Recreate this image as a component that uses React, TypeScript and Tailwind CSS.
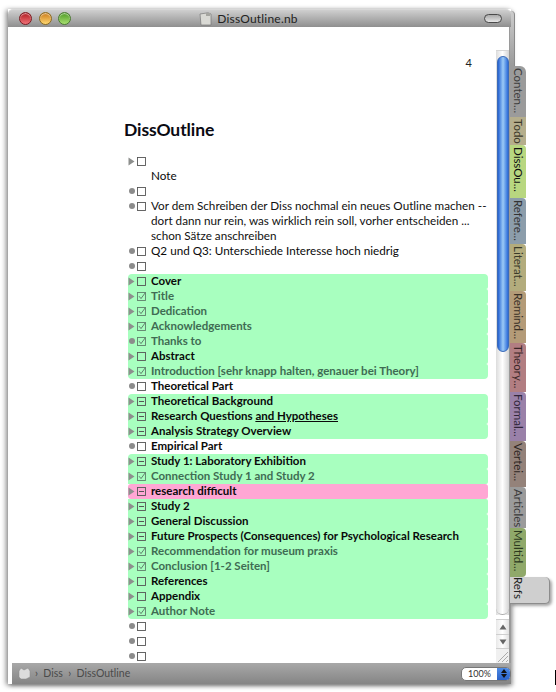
import React from "react";

type Box = "empty" | "check" | "minus";
type Mark = "tri" | "dot" | "none";

function Marker({ mark }: { mark: Mark }) {
  if (mark === "tri")
    return (
      <svg width="7" height="9" viewBox="0 0 7 9" className="shrink-0">
        <path d="M0.5 0.5 L6.5 4.5 L0.5 8.5 Z" fill="#8d8f8d" />
      </svg>
    );
  if (mark === "dot") return <div className="w-[6px] h-[6px] ml-[0.5px] mr-[0.5px] -mt-[2px] rounded-full bg-[#8c8c8c] shrink-0" />;
  return <div className="w-[7px] shrink-0" />;
}

function CheckBox({ box, dim }: { box: Box; dim?: boolean }) {
  const c = dim ? "#5f7f6c" : "#555";
  return (
    <svg width="9" height="9" viewBox="0 0 9 9" className="shrink-0 ml-[2px]">
      <rect x="0.5" y="0.5" width="8" height="8" fill="none" stroke={c} strokeWidth="0.9" />
      {box === "check" && <path d="M2 4.2 L4 6.6 L8.4 0.6" fill="none" stroke={c} strokeWidth="1" />}
      {box === "minus" && <path d="M2 4.5 H7" fill="none" stroke={c} strokeWidth="1" />}
    </svg>
  );
}

function Row({
  mark,
  box,
  children,
  bold,
  dim,
  pink,
  green,
}: {
  mark: Mark;
  box?: Box;
  children?: React.ReactNode;
  bold?: boolean;
  dim?: boolean;
  pink?: boolean;
  green?: boolean;
}) {
  const bg = pink ? "bg-[#ffa6d4] rounded-[3px]" : green ? "bg-[#a8ffbf] rounded-r-[2px]" : "";
  const col = dim ? "text-[#3f6c53]" : "text-[#0a0a0a]";
  return (
    <div className={`flex items-center h-[15px] ${bg}`}>
      <Marker mark={mark} />
      {box ? <CheckBox box={box} dim={dim} /> : <div className="w-[11px] shrink-0" />}
      <span className={`ml-[5px] -mt-[2px] leading-[15px] whitespace-nowrap ${bold ? "font-bold text-[11.5px]" : "text-[11.7px]"} ${col}`}>
        {children}
      </span>
    </div>
  );
}

function Green({ children }: { children: React.ReactNode }) {
  return <div className="rounded-[4px] overflow-hidden">{children}</div>;
}

const tabs: [string, string, string][] = [
  ["Conten...", "h-[51px] bg-[#9b9b9b] rounded-tr-[6px]", "text-[#3d3d3d]"],
  ["Todo", "h-[28px] bg-[#b5ae8c]", "text-[#3d3a2a]"],
  ["DissOu...", "h-[53px] bg-[#b8d780] rounded-tr-[4px]", "text-[#111]"],
  ["Refere...", "h-[46px] bg-[#8c9dab] rounded-tr-[4px]", "text-[#333]"],
  ["Literat...", "h-[47px] bg-[#b3ac7d] rounded-tr-[4px]", "text-[#3a3a2a]"],
  ["Remind...", "h-[52px] bg-[#b49b78] rounded-tr-[4px]", "text-[#3a3026]"],
  ["Theory...", "h-[49px] bg-[#b27e82] rounded-tr-[4px]", "text-[#3a2628]"],
  ["Formal...", "h-[49px] bg-[#9a81a9] rounded-tr-[4px]", "text-[#30263a]"],
  ["Vertei...", "h-[46px] bg-[#94827a] rounded-tr-[4px]", "text-[#2e2622]"],
  ["Articles", "h-[41px] bg-[#9b9b9b] rounded-tr-[4px]", "text-[#3a3a3a]"],
  ["Multid...", "h-[49px] bg-[#90a96a] rounded-tr-[4px] rounded-br-[4px]", "text-[#2c3a1e]"],
];

function Drawer() {
  return (
    <div className="flex flex-col mt-[2px] -ml-[1px] w-[40px] shrink-0">
      <div className="h-[55px] w-[5px] rounded-tr-[4px] bg-gradient-to-b from-[#cdcdcd] to-[#9a9a9a] border-r border-[#8a8a8a]" />
      {tabs.map(([t, cls, tc]) => (
        <div key={t} className={`w-[16px] overflow-hidden flex justify-center ${cls}`}>
          <span className={`[writing-mode:vertical-rl] text-[11.5px] leading-[14px] pt-[2px] whitespace-nowrap ${tc}`}>{t}</span>
        </div>
      ))}
      <div className="h-[27px] w-[40px] bg-[#cfcfcf] rounded-r-[5px] border-r border-b border-[#8c8c8c] shadow-[2px_2px_3px_rgba(0,0,0,0.35)] pl-[1px]">
        <span className="[writing-mode:vertical-rl] text-[11.5px] leading-[14px] text-[#222]">Refs</span>
      </div>
    </div>
  );
}

function Light({ from, to, ring }: { from: string; to: string; ring: string }) {
  return (
    <div
      className={`w-[13px] h-[13px] rounded-full border ${ring} ${from} ${to} bg-gradient-to-b shadow-[inset_0_1px_1px_rgba(255,255,255,0.6)]`}
    />
  );
}

function TitleBar() {
  return (
    <div className="relative h-[18px] shrink-0 rounded-t-[5px] bg-gradient-to-b from-[#cfcfcf] to-[#8f8f8f] border-t border-[#d8d8d8] flex items-center pl-[11px] pr-[9px]">
      <div className="flex gap-[6.5px]">
        <Light from="from-[#b0101c]" to="to-[#f07078]" ring="border-[#7a1a20]" />
        <Light from="from-[#c97a10]" to="to-[#ffd870]" ring="border-[#8a6a20]" />
        <Light from="from-[#4c9a20]" to="to-[#a8e070]" ring="border-[#4a7a30]" />
      </div>
      <div className="flex-1 flex items-center justify-center gap-[5px] pr-[58px]">
        <svg width="13" height="14" viewBox="0 0 13 14">
          <path d="M1 2 L9 0.8 L12 2 V13 H2 Z" fill="#d9d9d4" stroke="#777" strokeWidth="0.7" />
          <path d="M7 1 H11 V4 H7 Z" fill="#a5a5a0" />
        </svg>
        <span className="text-[12px] leading-none text-[#222] tracking-[0.2px]">DissOutline.nb</span>
      </div>
      <div className="w-[18px] h-[9px] rounded-full border border-[#4a4a4a] bg-gradient-to-b from-[#aaa] to-[#e6e6e6]" />
    </div>
  );
}

function Scrollbar() {
  return (
    <div className="w-[13px] shrink-0 flex flex-col pt-[23px] bg-white">
      <div className="flex-1 flex flex-col items-center bg-gradient-to-r from-[#dcdcdc] via-white to-[#d4d4d4] border-t border-[#d5d5d5]">
        <div className="h-[5px]" />
        <div className="h-[296px] w-[12px] shrink-0 rounded-full bg-gradient-to-r from-[#2560d0] via-[#9ccaf6] to-[#2c6ad8] border border-[#3a6ab8]" />
        <div className="flex-1 w-full rounded-b-full border-b border-[#aaa]" />
      </div>
      <div className="h-[4px]" />
      <div className="h-[15px] flex items-center justify-center border-t border-[#cfcfcf] bg-gradient-to-r from-[#e8e8e8] via-white to-[#e0e0e0]">
        <svg width="8" height="6" viewBox="0 0 8 6"><path d="M4 0.5 L7.5 5.5 H0.5 Z" fill="#666" /></svg>
      </div>
      <div className="h-[15px] flex items-center justify-center border-y border-[#cfcfcf] bg-gradient-to-r from-[#e8e8e8] via-white to-[#e0e0e0]">
        <svg width="8" height="6" viewBox="0 0 8 6"><path d="M4 5.5 L7.5 0.5 H0.5 Z" fill="#666" /></svg>
      </div>
      <div className="h-[14px] flex items-end justify-end bg-[#f0f0f0]">
        <svg width="12" height="12" viewBox="0 0 12 12" fill="none" stroke="#999" strokeWidth="0.8">
          <path d="M1 11 L11 1 M5 11 L11 5 M9 11 L11 9" />
        </svg>
      </div>
    </div>
  );
}

function StatusBar() {
  return (
    <div className="h-[21px] shrink-0 ml-[4px] bg-gradient-to-b from-[#a8a8a8] to-[#858585] flex items-center pl-[6px]">
      <svg width="13" height="13" viewBox="0 0 13 13">
        <path d="M1 4 L3 1 L6 3 L10 1 L12 4 V10 L8 12 H3 L1 10 Z" fill="#dcdcdc" stroke="#8a8a8a" strokeWidth="0.5" />
      </svg>
      <span className="ml-[4px] text-[10.5px] leading-none text-[#4a4a4a] whitespace-pre">›  Diss  ›  DissOutline</span>
      <div className="flex-1" />
      <div className="w-[50px] h-[14px] rounded-[5px] bg-white border border-[#777] flex items-center overflow-hidden">
        <span className="flex-1 text-center text-[9px] leading-none text-[#333]">100%</span>
        <div className="w-[13px] h-full bg-gradient-to-b from-[#4d8be6] to-[#2a62c8] flex flex-col items-center justify-center gap-[1px]">
          <svg width="6" height="4" viewBox="0 0 6 4"><path d="M3 0 L6 4 H0 Z" fill="#111" /></svg>
          <svg width="6" height="4" viewBox="0 0 6 4"><path d="M3 4 L6 0 H0 Z" fill="#111" /></svg>
        </div>
      </div>
    </div>
  );
}

function Document() {
  return (
    <div className="flex-1 bg-white pl-[120px] min-w-0">
      <div className="w-[360px]">
        <div className="text-right pt-[30px] pr-[16px] text-[11px] leading-[12px] text-[#222]">4</div>
        <h1 className="mt-[49px] h-[24px] -ml-[4px] text-[17.5px] leading-[24px] font-bold tracking-[-0.1px] text-[#0a0a12]">DissOutline</h1>
        <div className="mt-[12px]">
          <Row mark="tri" box="empty" />
          <Row mark="none">Note</Row>
          <Row mark="dot" box="empty" />
          <div className="flex h-[45px]">
            <div className="flex items-center h-[15px]">
              <Marker mark="dot" />
              <CheckBox box="empty" />
            </div>
            <div className="ml-[5px] -mt-[1px] text-[11.7px] leading-[15px] text-[#111] whitespace-nowrap">
              Vor dem Schreiben der Diss nochmal ein neues Outline machen --
              <br />
              dort dann nur rein, was wirklich rein soll, vorher entscheiden ...
              <br />
              schon Sätze anschreiben
            </div>
          </div>
          <Row mark="dot" box="empty">Q2 und Q3: Unterschiede Interesse hoch niedrig</Row>
          <Row mark="dot" box="empty" />
          <Green>
            <Row green bold mark="tri" box="empty">Cover</Row>
            <Row green bold dim mark="tri" box="check">Title</Row>
            <Row green bold dim mark="tri" box="check">Dedication</Row>
            <Row green bold dim mark="tri" box="check">Acknowledgements</Row>
            <Row green bold dim mark="dot" box="check">Thanks to</Row>
            <Row green bold mark="tri" box="empty">Abstract</Row>
            <Row green bold dim mark="tri" box="check">
              Introduction [sehr knapp halten, genauer bei Theory]
            </Row>
          </Green>
          <Row bold mark="dot" box="empty">Theoretical Part</Row>
          <Green>
            <Row green bold mark="tri" box="minus">Theoretical Background</Row>
            <Row green bold mark="tri" box="minus">
              Research Questions <span className="underline">and Hypotheses</span>
            </Row>
            <Row green bold mark="tri" box="minus">Analysis Strategy Overview</Row>
          </Green>
          <Row bold mark="dot" box="empty">Empirical Part</Row>
          <Green>
            <Row green bold mark="tri" box="minus">Study 1: Laboratory Exhibition</Row>
            <Row green bold dim mark="tri" box="check">Connection Study 1 and Study 2</Row>
            <Row pink bold mark="tri" box="minus">research difficult</Row>
            <Row green bold mark="tri" box="minus">Study 2</Row>
            <Row green bold mark="tri" box="minus">General Discussion</Row>
            <Row green bold mark="tri" box="minus">Future Prospects (Consequences) for Psychological Research</Row>
            <Row green bold dim mark="tri" box="check">Recommendation for museum praxis</Row>
            <Row green bold dim mark="tri" box="check">Conclusion [1-2 Seiten]</Row>
            <Row green bold mark="tri" box="empty">References</Row>
            <Row green bold mark="tri" box="empty">Appendix</Row>
            <Row green bold dim mark="tri" box="check">Author Note</Row>
          </Green>
          <Row mark="dot" box="empty" />
          <Row mark="dot" box="empty" />
          <Row mark="dot" box="empty" />
        </div>
      </div>
    </div>
  );
}

export default function App() {
  return (
    <div className="relative w-[556px] h-[692px] bg-white overflow-hidden flex pt-[9px] pl-[8px] font-['Lato',sans-serif]">
      <div className="w-[503px] h-[675px] shrink-0 flex flex-col shadow-[-2px_1px_5px_rgba(0,0,0,0.45),2px_2px_4px_rgba(0,0,0,0.3)]">
        <TitleBar />
        <div className="flex-1 flex min-h-0 bg-white border-r-[2px] border-[#9a9a9a]">
          <Document />
          <Scrollbar />
        </div>
        <StatusBar />
      </div>
      <Drawer />
      <div className="absolute left-[555px] top-[670px] w-px h-[15px] bg-black" />
    </div>
  );
}
